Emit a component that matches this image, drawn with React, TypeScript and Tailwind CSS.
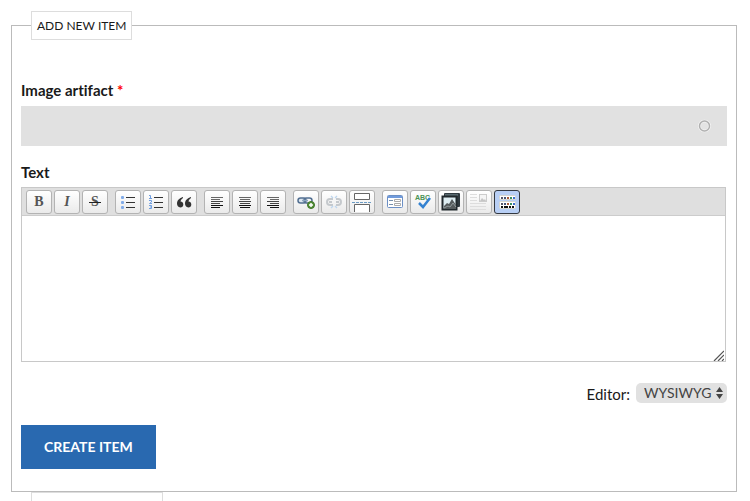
import type { ReactNode } from "react";

type Tool = { label: string; icon: ReactNode; active?: boolean };

function Glyph({ children }: { children: ReactNode }) {
  return (
    <svg width="20" height="20" viewBox="0 0 20 20" aria-hidden="true">
      {children}
    </svg>
  );
}

const bars = (rows: number[][]) => (
  <Glyph>
    {rows.map(([x, w], i) => (
      <rect key={i} x={x} y={5 + i * 2} width={w} height="1" fill={i < 2 ? "#666" : i < 4 ? "#444" : "#111"} />
    ))}
  </Glyph>
);

const quote = "M1 0c-3.500 1-6 3.400-6 6.600 0 2.200 1.300 3.800 3.300 3.800 1.800 0 3-1.300 3-3 0-1.700-1.200-2.800-2.800-2.800C-1.300 3.100-.2 1.800 1 .9z";

function Dots({ y }: { y: number }) {
  return (
    <g shapeRendering="crispEdges">
      <rect x="4" y={y} width="2" height="2" fill="#556" />
      <rect x="7" y={y} width="2" height="2" fill="#457" />
      <rect x="10" y={y} width="2" height="2" fill="#a65a3c" />
      <rect x="13" y={y} width="2" height="2" fill="#3b8f62" />
      <rect x="16" y={y} width="2" height="2" fill="#3c70d0" />
    </g>
  );
}

const groups: Tool[][] = [
  [
    { label: "Bold", icon: <span className="font-bold">B</span> },
    { label: "Italic", icon: <span className="font-bold italic">I</span> },
    {
      label: "Strikethrough",
      icon: (
        <span className="relative font-bold">
          S<span className="absolute top-1/2 -left-0.5 h-px w-3 bg-[#222]" />
        </span>
      ),
    },
  ],
  [
    {
      label: "Unordered list",
      icon: (
        <Glyph>
          {[4, 9, 14].map((y) => (
            <g key={y}>
              <rect x="3" y={y} width="3" height="3" rx="1" fill="#81abe8" />
              <rect x="8" y={y + 1} width="9" height="1" fill="#333" />
            </g>
          ))}
        </Glyph>
      ),
    },
    {
      label: "Ordered list",
      icon: (
        <Glyph>
          <path d="M3 3.500h1.500v3M3 6.500h3M3 8.500h2.500v1.500L3.500 11.500H6M3 13.500h2.500v3H3M4 15h1.500" fill="none" stroke="#6f9ee0" />
          {[5, 10, 15].map((y) => (
            <rect key={y} x="8" y={y} width="9" height="1" fill="#333" />
          ))}
        </Glyph>
      ),
    },
    {
      label: "Quote",
      icon: (
        <Glyph>
          <path d={quote} transform="translate(8 5)" fill="#333" />
          <path d={quote} transform="translate(16 5)" fill="#333" />
        </Glyph>
      ),
    },
  ],
  [
    { label: "Align left", icon: bars([[4, 12], [4, 9], [4, 12], [4, 9], [4, 12], [4, 9]]) },
    { label: "Align center", icon: bars([[4, 12], [5, 10], [4, 12], [5, 10], [4, 12], [5, 10]]) },
    { label: "Align right", icon: bars([[4, 12], [7, 9], [4, 12], [7, 9], [4, 12], [7, 9]]) },
  ],
  [
    {
      label: "Insert link",
      icon: (
        <Glyph>
          <rect x="2" y="6" width="8" height="5" rx="2.500" fill="#dce6ef" stroke="#526f91" strokeWidth="1.500" />
          <rect x="8" y="6" width="8" height="5" rx="2.500" fill="none" stroke="#526f91" strokeWidth="1.500" />
          <path d="M6 8.500h6" stroke="#8ca5bf" strokeWidth="1.500" />
          <circle cx="15" cy="13" r="3.500" fill="#56913a" stroke="#3f7628" />
          <path d="M13 13h4M15 11v4" stroke="#fff" strokeWidth="1.500" />
        </Glyph>
      ),
    },
    {
      label: "Unlink",
      icon: (
        <Glyph>
          <path d="M9 7H6a3 3 0 000 6h3M12 7h2a3 3 0 010 6h-2M5 10h3M12 10h3" fill="none" stroke="#c5c9cd" strokeWidth="2" />
          <path d="M7 4l2 2M13 4l-2 2M7 16l2-2M13 16l-2-2" stroke="#bdd6ef" strokeWidth="1.300" />
        </Glyph>
      ),
    },
    {
      label: "Teaser break",
      icon: (
        <Glyph>
          <path d="M2.500 1.500v6h15v-6zM2.500 20v-7.500h15V20" fill="#fff" stroke="#666" />
          <path d="M0 10.500h20" stroke="#6c9bc4" strokeDasharray="3 1" />
        </Glyph>
      ),
    },
  ],
  [
    {
      label: "Templates",
      icon: (
        <Glyph>
          <rect x="2.500" y="3.500" width="15" height="12" rx="1" fill="#fff" stroke="#6b8fc5" />
          <path d="M3 5h14" stroke="#719bdc" strokeWidth="2" />
          <path d="M4 8.500h4M4 12.500h4" stroke="#7790ad" />
          <path d="M9.500 7.500h6v2h-6zM9.500 11.500h6v2h-6z" fill="#fff" stroke="#aaa" />
        </Glyph>
      ),
    },
    {
      label: "Check spelling",
      icon: (
        <Glyph>
          <text x="2" y="8" fontSize="7" fontWeight="700" fontFamily="Liberation Sans, sans-serif" fill="#4a9354">ABC</text>
          <path d="M6 11l4 4 7-9" fill="none" stroke="#3482d1" strokeWidth="2.500" />
        </Glyph>
      ),
    },
    {
      label: "Insert image",
      icon: (
        <Glyph>
          <rect x="3" y="1" width="16" height="14" rx="1" fill="#303a40" />
          <path d="M4 3h13" stroke="#8299a1" />
          <rect x="1.500" y="4.500" width="14" height="13" fill="#deedf2" stroke="#20282c" strokeWidth="2" />
          <path d="M3 14l3-3 2 1 3-5 4 6v4H3z" fill="#555b5d" />
          <path d="M3 16l4-2 2 1 3-4 3 4" fill="none" stroke="#929b9d" />
        </Glyph>
      ),
    },
    {
      label: "Page layout",
      icon: (
        <Glyph>
          <path d="M1 2.500h7M1 5.500h7M1 8.500h7M1 11.500h16M1 14.500h16M1 17.500h16" stroke="#ddd" />
          <rect x="10.500" y="2.500" width="7" height="7" fill="#f5f5f5" stroke="#ccc" />
          <path d="M11 9l2-3 2 2 1-1 1 2z" fill="#c5c5c5" />
        </Glyph>
      ),
    },
    {
      label: "Show toolbars",
      active: true,
      icon: (
        <Glyph>
          <rect x="2.500" y="3.500" width="16" height="4" rx="1" fill="#fff" stroke="#d5d5cf" />
          <rect x="2.500" y="9.500" width="16" height="7" rx="1" fill="#fff" stroke="#d5d5cf" />
          <Dots y={5} />
          <Dots y={11} />
          <path d="M4 15h2M7 15h4M12 15h2M15 15h2" stroke="#111" strokeWidth="2" />
        </Glyph>
      ),
    },
  ],
];

function ToolButton({ label, icon, active }: Tool) {
  return (
    <button
      type="button"
      aria-label={label}
      aria-pressed={!!active}
      className={`flex h-6 w-[26px] items-center justify-center rounded-[3px] border font-['Liberation_Serif',serif] text-sm leading-none text-[#555] ${
        active ? "border-[#333840] bg-[#b8cff5]" : "border-[#b3b3b3] bg-linear-to-b from-white to-[#eaeaea]"
      }`}
    >
      {icon}
    </button>
  );
}

export default function App() {
  return (
    <main className="h-screen overflow-hidden bg-white pt-[11px] pr-[13px] pl-[11px] font-[Lato,sans-serif] text-[15px] leading-6 text-[#1a1a1a] [font-variant-ligatures:none]">
      <fieldset className="border border-[#bbb] px-[9px] pb-[22px]">
        <legend className="ml-[10px] border border-[#ddd] px-[5px] py-1 text-xs leading-[19px]">ADD NEW ITEM</legend>

        <label htmlFor="artifact" className="mt-[38px] block font-bold">
          Image artifact <span className="text-[#f00]">*</span>
        </label>
        <div className="relative mt-1">
          <input id="artifact" type="text" required className="block h-10 w-full bg-[#e1e1e1] px-3 pr-10 outline-none" />
          <svg className="absolute top-1/2 right-4 -translate-y-1/2" width="13" height="13" viewBox="0 0 13 13" aria-hidden="true">
            <circle cx="6.500" cy="6.500" r="5" fill="#e4e4e4" stroke="#f3f3f3" strokeWidth="3" />
            <circle cx="6.500" cy="6.500" r="5" fill="none" stroke="#b0b0b0" strokeWidth="1.500" />
          </svg>
        </div>

        <label htmlFor="body" className="mt-[14px] block font-bold">Text</label>
        <div className="mt-[3px] mr-px border border-[#c8c8c8]">
          <div role="toolbar" aria-label="Formatting" className="flex gap-[7px] border-b border-[#ccc] bg-[#dfdfdf] px-1 pt-0.5 pb-px">
            {groups.map((tools, i) => (
              <div key={i} className="flex gap-0.5">
                {tools.map((tool) => (
                  <ToolButton key={tool.label} {...tool} />
                ))}
              </div>
            ))}
          </div>
          <div className="relative">
            <textarea id="body" className="block h-[145px] w-full resize-none p-2 outline-none" />
            <svg className="absolute right-px bottom-0" width="11" height="11" viewBox="0 0 11 11" aria-hidden="true">
              <path d="M1 11L11 1M5 11l6-6M9 11l2-2" stroke="#555" strokeWidth="1.200" />
            </svg>
          </div>
        </div>

        <div className="mt-[18px] flex items-center justify-end gap-[6px]">
          <label htmlFor="editor" className="pt-0.5">Editor:</label>
          <div className="relative">
            <select id="editor" className="block h-5 w-[91px] appearance-none rounded-[5px] bg-[#e1e1e1] pl-2 text-sm leading-5 text-[#444]">
              <option>WYSIWYG</option>
              <option>Plain text</option>
            </select>
            <svg className="pointer-events-none absolute top-1 right-1" width="7" height="12" viewBox="0 0 7 12" aria-hidden="true">
              <path d="M3.500 0L7 5H0zM0 7h7l-3.500 5z" fill="#444" />
            </svg>
          </div>
        </div>

        <button type="button" className="mt-[19px] block h-11 bg-[#2969b0] px-[23px] text-sm font-bold text-white">CREATE ITEM</button>
      </fieldset>

      <fieldset className="border border-[#bbb] px-[9px] pb-6">
        <legend className="ml-[10px] h-[31px] w-[132px] border border-[#ddd]" />
      </fieldset>
    </main>
  );
}
